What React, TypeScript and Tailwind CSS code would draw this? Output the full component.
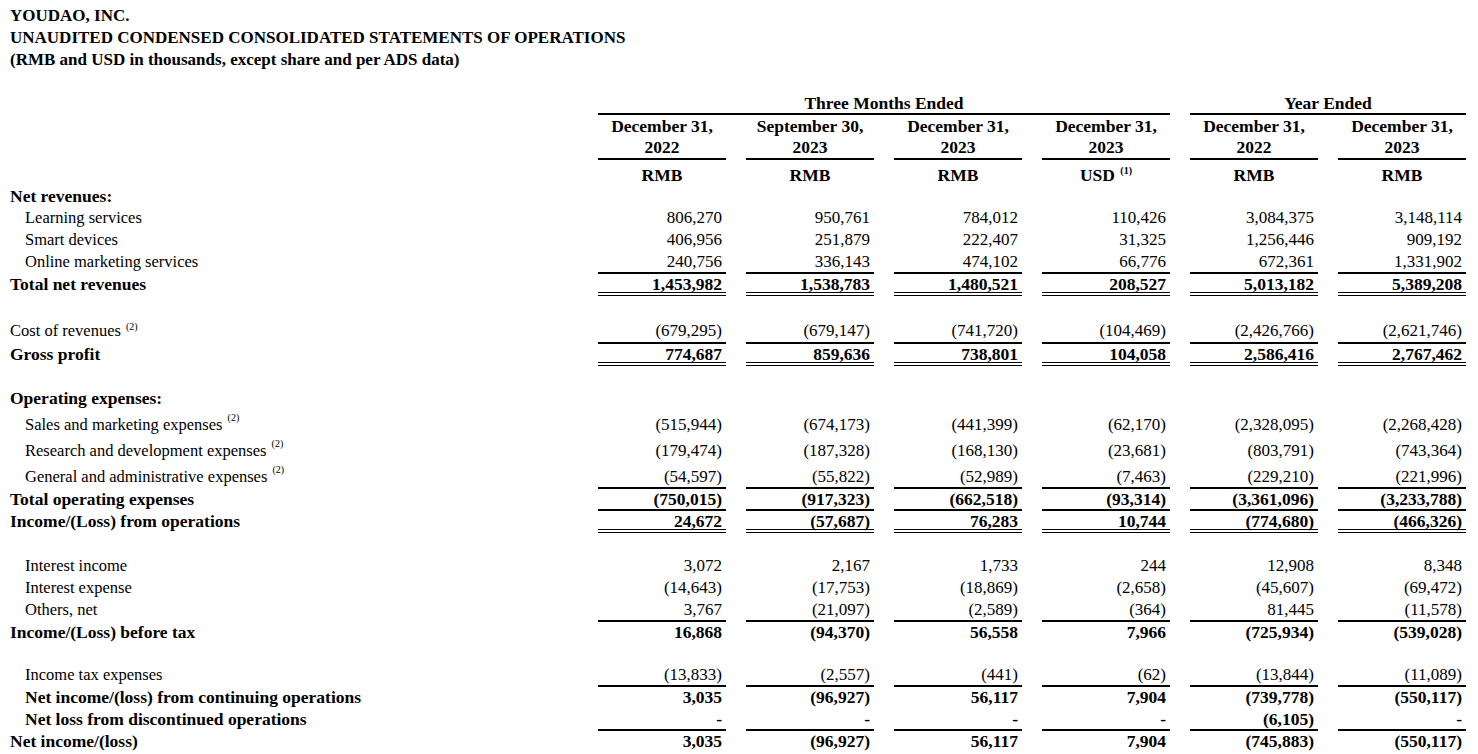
import type { ReactNode } from 'react'

type Line = 'single' | 'double'

interface RowProps {
  label: ReactNode
  values?: string[]
  bold?: boolean
  indent?: boolean
  line?: Line
  h?: string
  mt?: string
}

const cols = [
  { date: 'December 31,', year: '2022', unit: 'RMB' },
  { date: 'September 30,', year: '2023', unit: 'RMB' },
  { date: 'December 31,', year: '2023', unit: 'RMB' },
  { date: 'December 31,', year: '2023', unit: 'USD', note: '(1)' },
  { date: 'December 31,', year: '2022', unit: 'RMB' },
  { date: 'December 31,', year: '2023', unit: 'RMB' },
]

function Note({ n, className = 'text-[10px] -top-[5px]' }: { n: string; className?: string }) {
  return <sup className={`ml-[1px] ${className}`}>{n}</sup>
}

function Row({ label, values, bold, indent, line, h = 'h-[22px]', mt = '' }: RowProps) {
  const border =
    line === 'single' ? 'border-b-2 border-black' : line === 'double' ? 'border-b-4 border-double border-black' : ''
  return (
    <div className={`flex ${h} ${mt} ${bold ? 'font-bold text-[17.5px]' : 'text-[17px]'}`}>
      <div
        className={`w-[598px] shrink-0 leading-[20px] whitespace-nowrap ${indent ? 'pl-[25px]' : 'pl-[10px]'} ${
          bold ? '' : 'text-[16.5px]'
        }`}
      >
        {label}
      </div>
      {values && (
        <div className="flex gap-[20px]">
          {values.map((v, i) => (
            <div
              key={i}
              className={`box-border h-full w-[128px] shrink-0 pr-[4px] text-right leading-[20px] whitespace-nowrap ${border}`}
            >
              {v}
            </div>
          ))}
        </div>
      )}
    </div>
  )
}

export default function App() {
  return (
    <div className="min-h-screen w-[1478px] bg-white font-['Liberation_Serif',serif] text-[17px] text-black">
      {/* title */}
      <div className="pl-[10px] pt-[5px] font-bold leading-[22px]">
        <div>YOUDAO, INC.</div>
        <div>UNAUDITED CONDENSED CONSOLIDATED STATEMENTS OF OPERATIONS</div>
        <div>(RMB and USD in thousands, except share and per ADS data)</div>
      </div>

      {/* column headers */}
      <div className="mt-[22px] flex text-[17.5px] font-bold">
        <div className="w-[598px] shrink-0" />
        <div className="flex gap-[20px]">
          <div className="box-border h-[22px] w-[572px] border-b-2 border-black text-center leading-[20px]">
            Three Months Ended
          </div>
          <div className="box-border h-[22px] w-[276px] border-b-2 border-black text-center leading-[20px]">
            Year Ended
          </div>
        </div>
      </div>
      <div className="flex text-[17.5px] font-bold">
        <div className="w-[598px] shrink-0" />
        <div className="flex gap-[20px]">
          {cols.map((c, i) => (
            <div key={i} className="box-border w-[128px] shrink-0 border-b-2 border-black pt-[1px] text-center leading-[21px]">
              <div>{c.date}</div>
              <div>{c.year}</div>
            </div>
          ))}
        </div>
      </div>
      <div className="mt-[5px] flex h-[21px] text-[17.5px] font-bold">
        <div className="w-[598px] shrink-0" />
        <div className="flex gap-[20px]">
          {cols.map((c, i) => (
            <div key={i} className="w-[128px] shrink-0 text-center leading-[20px]">
              {c.unit}
              {c.note && (
                <>
                  {' '}
                  <Note n={c.note} className="text-[10px] -top-[7px]" />
                </>
              )}
            </div>
          ))}
        </div>
      </div>

      {/* revenues */}
      <Row label="Net revenues:" bold />
      <Row label="Learning services" indent values={['806,270', '950,761', '784,012', '110,426', '3,084,375', '3,148,114']} />
      <Row label="Smart devices" indent values={['406,956', '251,879', '222,407', '31,325', '1,256,446', '909,192']} />
      <Row
        label="Online marketing services"
        indent
        line="single"
        values={['240,756', '336,143', '474,102', '66,776', '672,361', '1,331,902']}
      />
      <Row
        label="Total net revenues"
        bold
        line="double"
        values={['1,453,982', '1,538,783', '1,480,521', '208,527', '5,013,182', '5,389,208']}
      />

      <Row
        label={
          <>
            Cost of revenues <Note n="(2)" className="text-[10px] -top-[6px]" />
          </>
        }
        mt="mt-[25px]"
        h="h-[23px]"
        line="single"
        values={['(679,295)', '(679,147)', '(741,720)', '(104,469)', '(2,426,766)', '(2,621,746)']}
      />
      <Row
        label="Gross profit"
        bold
        line="double"
        values={['774,687', '859,636', '738,801', '104,058', '2,586,416', '2,767,462']}
      />

      {/* operating expenses */}
      <Row label="Operating expenses:" bold mt="mt-[22px]" h="h-[27px]" />
      <Row
        label={
          <>
            Sales and marketing expenses <Note n="(2)" className="text-[10px] -top-[9px]" />
          </>
        }
        indent
        h="h-[26px]"
        values={['(515,944)', '(674,173)', '(441,399)', '(62,170)', '(2,328,095)', '(2,268,428)']}
      />
      <Row
        label={
          <>
            Research and development expenses <Note n="(2)" className="text-[10px] -top-[9px]" />
          </>
        }
        indent
        h="h-[26px]"
        values={['(179,474)', '(187,328)', '(168,130)', '(23,681)', '(803,791)', '(743,364)']}
      />
      <Row
        label={
          <>
            General and administrative expenses <Note n="(2)" className="text-[10px] -top-[9px]" />
          </>
        }
        indent
        line="single"
        values={['(54,597)', '(55,822)', '(52,989)', '(7,463)', '(229,210)', '(221,996)']}
      />
      <Row
        label="Total operating expenses"
        bold
        line="single"
        values={['(750,015)', '(917,323)', '(662,518)', '(93,314)', '(3,361,096)', '(3,233,788)']}
      />
      <Row
        label="Income/(Loss) from operations"
        bold
        line="double"
        values={['24,672', '(57,687)', '76,283', '10,744', '(774,680)', '(466,326)']}
      />

      {/* other income */}
      <Row
        label="Interest income"
        indent
        mt="mt-[23px]"
        values={['3,072', '2,167', '1,733', '244', '12,908', '8,348']}
      />
      <Row
        label="Interest expense"
        indent
        values={['(14,643)', '(17,753)', '(18,869)', '(2,658)', '(45,607)', '(69,472)']}
      />
      <Row
        label="Others, net"
        indent
        line="single"
        values={['3,767', '(21,097)', '(2,589)', '(364)', '81,445', '(11,578)']}
      />
      <Row
        label="Income/(Loss) before tax"
        bold
        values={['16,868', '(94,370)', '56,558', '7,966', '(725,934)', '(539,028)']}
      />

      {/* tax and net */}
      <Row
        label="Income tax expenses"
        indent
        mt="mt-[21px]"
        line="single"
        values={['(13,833)', '(2,557)', '(441)', '(62)', '(13,844)', '(11,089)']}
      />
      <Row
        label="Net income/(loss) from continuing operations"
        indent
        bold
        values={['3,035', '(96,927)', '56,117', '7,904', '(739,778)', '(550,117)']}
      />
      <Row
        label="Net loss from discontinued operations"
        indent
        bold
        line="single"
        values={['-', '-', '-', '-', '(6,105)', '-']}
      />
      <Row
        label="Net income/(loss)"
        bold
        values={['3,035', '(96,927)', '56,117', '7,904', '(745,883)', '(550,117)']}
      />
    </div>
  )
}
